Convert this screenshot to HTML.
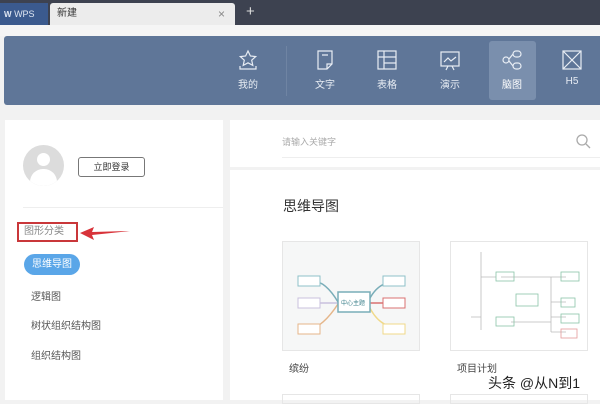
<!DOCTYPE html>
<html><head><meta charset="utf-8"><style>
*{margin:0;padding:0;box-sizing:border-box}
body{width:600px;height:400px;overflow:hidden;background:#f2f2f2;font-family:"Liberation Sans","Noto Sans CJK SC",sans-serif;position:relative}
.a{position:absolute}
.nav{color:#e8edf4;font-size:10px;text-align:center;width:44px}
.nav svg{display:block;margin:0 auto 5px}
.lab{font-size:10px;color:#555}
</style></head><body>
<div class="a" style="left:0;top:0;width:600px;height:25px;background:#3d4250"></div>
<div class="a" style="left:0;top:3px;width:48px;height:22px;background:#3b5a8e;color:#dfe6f2;font-size:9px;line-height:22px;padding-left:4px"><b style="font-size:8px">W</b> WPS</div>
<div class="a" style="left:50px;top:3px;width:185px;height:22px;background:#ececec;border-radius:3px 3px 0 0;font-size:10px;color:#333;line-height:22px;padding-left:7px">新建<span class="a" style="left:168px;top:0;color:#888;font-size:12px">×</span></div>
<div class="a" style="left:246px;top:3px;color:#ddd;font-size:15px">+</div>
<div class="a" style="left:0;top:25px;width:600px;height:11px;background:#f5f5f5"></div>
<div class="a" style="left:4px;top:36px;width:600px;height:69px;background:#5f7698;border-radius:3px"></div>
<div class="a" style="left:286px;top:46px;width:1px;height:50px;background:#6f84a3"></div>
<div class="a" style="left:489px;top:41px;width:47px;height:59px;background:#7a8fad;border-radius:3px"></div>
<div class="a nav" style="left:226px;top:49px"><svg width="22" height="22" viewBox="0 0 22 22" fill="none" stroke="#e8edf4" stroke-width="1.2"><path d="M11 2l2.4 5 5.3.6-4 3.6 1.1 5.2L11 13.8 6.2 16.4l1.1-5.2-4-3.6 5.3-.6z"/><path d="M3 17v3h16v-3"/></svg>我的</div>
<div class="a nav" style="left:303px;top:49px"><svg width="22" height="22" viewBox="0 0 22 22" fill="none" stroke="#e8edf4" stroke-width="1.2"><path d="M4 2h14v13l-5 5H4z"/><path d="M8 6h6M13 20v-5h5"/></svg>文字</div>
<div class="a nav" style="left:365px;top:49px"><svg width="22" height="22" viewBox="0 0 22 22" fill="none" stroke="#e8edf4" stroke-width="1.2"><rect x="2" y="2" width="18" height="18"/><path d="M2 8h18M8 2v18M8 14h12"/></svg>表格</div>
<div class="a nav" style="left:428px;top:49px"><svg width="22" height="22" viewBox="0 0 22 22" fill="none" stroke="#e8edf4" stroke-width="1.2"><rect x="2" y="3" width="18" height="14"/><path d="M5 13l4-4 3 3 5-4M7 21l2-4M15 21l-2-4"/></svg>演示</div>
<div class="a nav" style="left:490px;top:49px;color:#fff"><svg width="22" height="22" viewBox="0 0 22 22" fill="none" stroke="#e8edf4" stroke-width="1.2"><circle cx="5" cy="11" r="3"/><rect x="12" y="2" width="8" height="6" rx="3"/><rect x="12" y="14" width="8" height="6" rx="3"/><path d="M8 10l4-5M8 12l4 5"/></svg>脑图</div>
<div class="a nav" style="left:550px;top:49px"><svg width="22" height="22" viewBox="0 0 22 22" fill="none" stroke="#e8edf4" stroke-width="1.2"><rect x="2" y="2" width="18" height="18"/><path d="M2 2l9 9 9-9M2 20l9-9 9 9"/></svg>H5</div>

<div class="a" style="left:5px;top:120px;width:218px;height:280px;background:#fff"></div>
<div class="a" style="left:23px;top:145px;width:41px;height:41px;border-radius:50%;background:#dcdcdc;overflow:hidden"><div class="a" style="left:14px;top:8px;width:13px;height:13px;border-radius:50%;background:#fff"></div><div class="a" style="left:7px;top:24px;width:27px;height:20px;border-radius:13px 13px 0 0;background:#fff"></div></div>
<div class="a" style="left:78px;top:157px;width:67px;height:20px;border:1px solid #777;border-radius:3px;font-size:9px;color:#333;text-align:center;line-height:18px">立即登录</div>
<div class="a" style="left:23px;top:207px;width:200px;height:1px;background:#eee"></div>
<div class="a" style="left:17px;top:222px;width:61px;height:20px;border:2px solid #c9373a;font-size:10px;color:#888;line-height:16px;padding-left:5px">图形分类</div>
<svg class="a" style="left:78px;top:226px" width="54" height="14"><path d="M2 7l14-6-2 5 38-1-38 4 2 5z" fill="#d8333a"/></svg>
<div class="a" style="left:24px;top:254px;width:56px;height:21px;border-radius:11px;background:#5aa6e8;color:#fff;font-size:10px;text-align:center;line-height:21px">思维导图</div>
<div class="a lab" style="left:31px;top:288px">逻辑图</div>
<div class="a lab" style="left:31px;top:317px">树状组织结构图</div>
<div class="a lab" style="left:31px;top:347px">组织结构图</div>

<div class="a" style="left:230px;top:120px;width:370px;height:47px;background:#fff"></div>
<div class="a" style="left:282px;top:135px;font-size:9px;color:#aaa">请输入关键字</div>
<div class="a" style="left:282px;top:157px;width:318px;height:1px;background:#eee"></div>
<svg class="a" style="left:575px;top:133px" width="16" height="16" fill="none" stroke="#aaa" stroke-width="1.3"><circle cx="7" cy="7" r="5"/><path d="M11 11l4 4"/></svg>
<div class="a" style="left:230px;top:170px;width:370px;height:230px;background:#fff"></div>
<div class="a" style="left:283px;top:196px;font-size:14px;color:#333">思维导图</div>
<div class="a" style="left:282px;top:241px;width:138px;height:110px;background:#f6f7f7;border:1px solid #e6e6e6">
<svg width="136" height="108" fill="none" stroke-width="1.5"><path d="M55 60Q40 35 25 40" stroke="#79adb8"/><path d="M55 62Q40 85 25 88" stroke="#e5b68a"/><path d="M85 60Q95 38 115 40" stroke="#79adb8"/><path d="M85 62Q95 85 115 86" stroke="#f0d98a"/><path d="M85 61h30" stroke="#d97070"/><path d="M55 61H30" stroke="#c9c0de"/><rect x="55" y="50" width="32" height="20" fill="#fff" stroke="#79adb8"/><rect x="15" y="34" width="22" height="10" fill="#fff" stroke="#8fc1c8" stroke-width="1"/><rect x="15" y="56" width="22" height="10" fill="#fff" stroke="#c9c0de" stroke-width="1"/><rect x="15" y="82" width="22" height="10" fill="#fff" stroke="#e5b68a" stroke-width="1"/><rect x="100" y="34" width="22" height="10" fill="#fff" stroke="#8fc1c8" stroke-width="1"/><rect x="100" y="56" width="22" height="10" fill="#fff" stroke="#d97070" stroke-width="1"/><rect x="100" y="82" width="22" height="10" fill="#fff" stroke="#f0d98a" stroke-width="1"/><text x="58" y="63" font-size="6" fill="#3a7f8a" stroke="none" font-family="Noto Sans CJK SC">中心主题</text></svg></div>
<div class="a" style="left:450px;top:241px;width:138px;height:110px;background:#fff;border:1px solid #e6e6e6">
<svg width="136" height="108" fill="none" stroke="#bbb" stroke-width="0.8"><path d="M30 10v60M30 35h15M20 75h10M30 58v30M50 35h50M100 35v55M100 35h15M100 60h15M100 75h15M100 90h15M60 80h40"/><rect x="45" y="30" width="18" height="9" stroke="#8bc4a8"/><rect x="65" y="52" width="22" height="12" stroke="#8bc4a8"/><rect x="110" y="30" width="18" height="9" stroke="#8bc4a8"/><rect x="110" y="56" width="14" height="9" stroke="#8bc4a8"/><rect x="110" y="72" width="18" height="9" stroke="#8bc4a8"/><rect x="110" y="87" width="16" height="9" stroke="#e49a9a"/><rect x="45" y="75" width="18" height="9" stroke="#8bc4a8"/></svg></div>
<div class="a" style="left:289px;top:360px;font-size:10px;color:#444">缤纷</div>
<div class="a" style="left:457px;top:360px;font-size:10px;color:#444">项目计划</div>
<div class="a" style="left:282px;top:394px;width:138px;height:10px;border:1px solid #e6e6e6"></div>
<div class="a" style="left:450px;top:394px;width:138px;height:10px;border:1px solid #e6e6e6"></div>
<div class="a" style="left:488px;top:373px;font-size:14px;color:#222;background:rgba(255,255,255,.6)">头条 @从N到1</div>
</body></html>
